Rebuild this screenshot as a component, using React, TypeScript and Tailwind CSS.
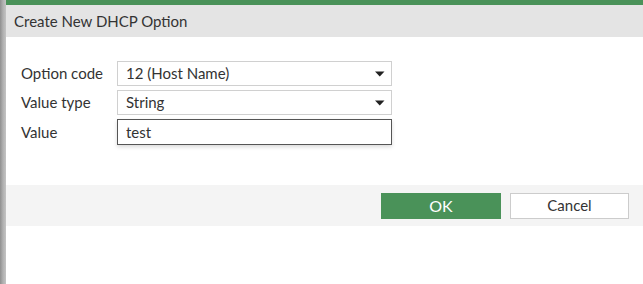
import { useState } from "react";

const rows = [
  { label: "Option code", value: "12 (Host Name)", kind: "select" },
  { label: "Value type", value: "String", kind: "select" },
  { label: "Value", value: "test", kind: "input" },
];

function Caret() {
  return (
    <svg width="10" height="6" viewBox="0 0 10 6" className="shrink-0">
      <path d="M0 0.5 L9.5 0.5 L4.75 5.5 Z" fill="#222" />
    </svg>
  );
}

export default function App() {
  const [val, setVal] = useState("test");

  return (
    <div
      className="flex h-[284px] w-[643px] overflow-hidden bg-white text-[15px] text-[#333]"
      style={{ fontFamily: "Lato, 'Open Sans', sans-serif" }}
    >
      {/* linker Rand */}
      <div className="w-[6px] shrink-0 bg-gradient-to-r from-[#8f8f8f] via-[#b0b0b0] to-[#c4c4c4]" />

      <div className="flex flex-1 flex-col">
        <div className="h-[5px] bg-[#4a9259]" />

        {/* Kopfzeile */}
        <div className="flex h-[32px] items-center bg-[#e4e4e4] pl-[8px]">
          <span className="text-[15px] text-[#333]">Create New DHCP Option</span>
        </div>

        {/* Formular */}
        <div className="flex flex-col gap-[4px] pl-[15px] pt-[24px]">
          {rows.map((r) =>
            r.kind === "select" ? (
              <div key={r.label} className="flex items-center">
                <div className="w-[96px]">{r.label}</div>
                <div className="flex h-[25px] w-[275px] items-center justify-between border border-[#d0d0d0] bg-white pl-[8px] pr-[6px]">
                  <span>{r.value}</span>
                  <Caret />
                </div>
              </div>
            ) : (
              <div key={r.label} className="flex items-center">
                <div className="w-[96px]">{r.label}</div>
                <input
                  value={val}
                  onChange={(e) => setVal(e.target.value)}
                  className="h-[26px] w-[275px] border border-[#555] bg-white pl-[8px] text-[15px] text-[#333] shadow-[0_2px_4px_rgba(0,0,0,0.15)] outline-none"
                />
              </div>
            )
          )}
        </div>

        {/* Fußzeile */}
        <div className="mt-[40px] flex h-[41px] items-center justify-end gap-[9px] bg-[#f4f4f4] pr-[14px]">
          <button className="h-[26px] w-[120px] bg-[#4a9259] text-[16px] text-white">OK</button>
          <button className="h-[26px] w-[119px] border border-[#cccccc] bg-white text-[15px] text-[#333]">
            Cancel
          </button>
        </div>
      </div>
    </div>
  );
}
